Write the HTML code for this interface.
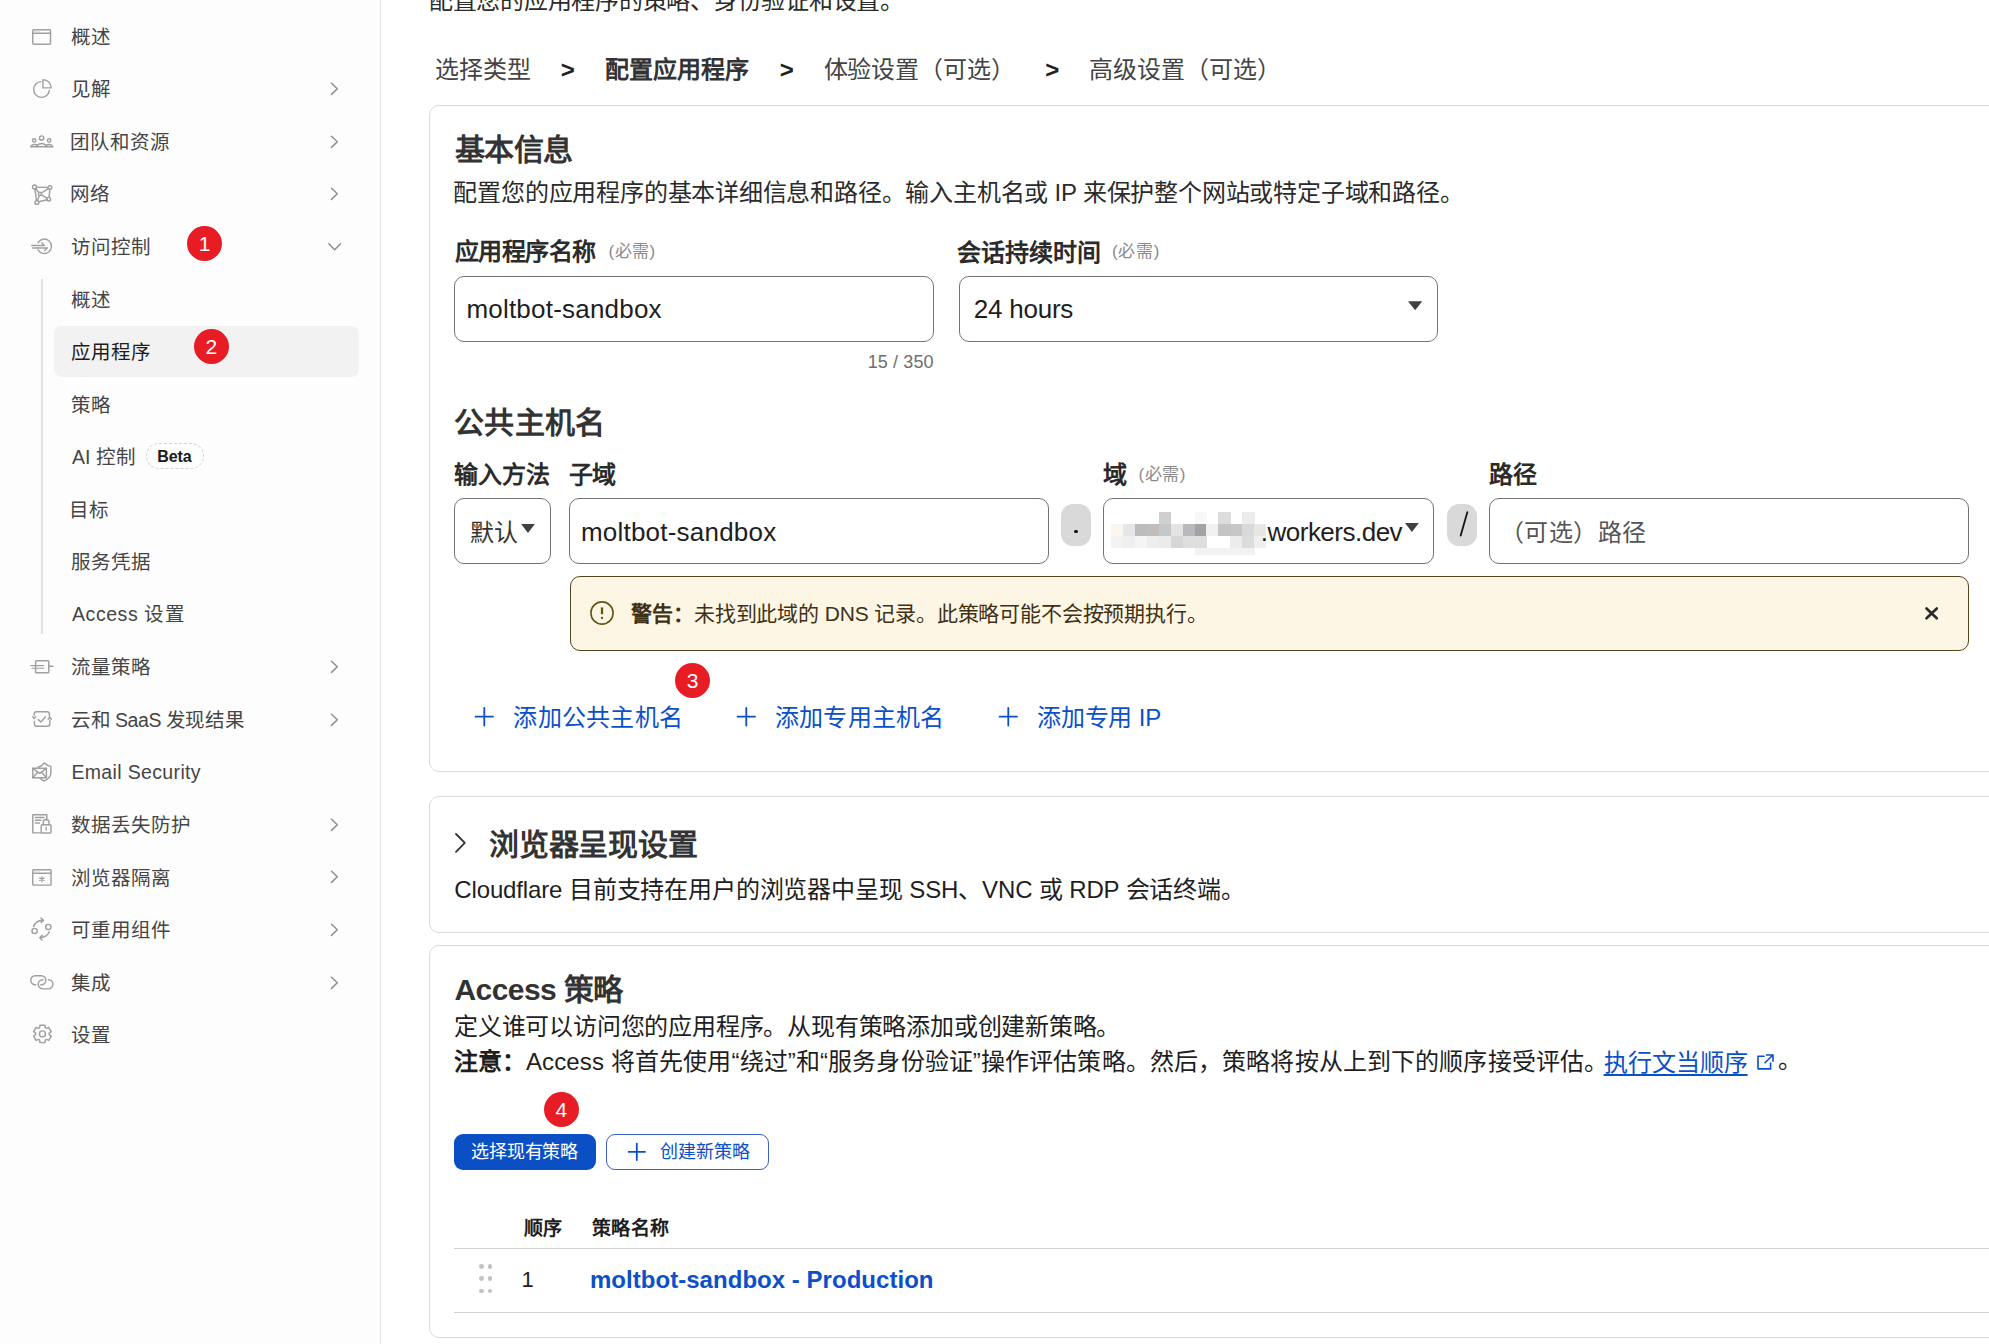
<!DOCTYPE html>
<html lang="zh-CN"><head><meta charset="utf-8">
<style>
*{box-sizing:border-box;margin:0;padding:0}
html,body{width:1989px;height:1344px;overflow:hidden;background:#fff}
body{position:relative;font-family:"Liberation Sans",sans-serif;color:#222}
.a{position:absolute;white-space:nowrap}
b{font-weight:700}
u{text-decoration:underline;text-underline-offset:3px;text-decoration-thickness:1.5px}
.badge{width:35px;height:35px;border-radius:50%;background:#e81c24;color:#fff;font-size:21px;line-height:35px;text-align:center}
</style></head>
<body>
<div class="a" style="left:0.00px;top:0.00px;width:380.00px;height:1344.00px;background:#fdfdfd"></div>
<div class="a" style="left:380.00px;top:0.00px;width:1.20px;height:1344.00px;background:#e3e3e3"></div>
<div class="a" style="left:54.00px;top:326.20px;width:304.60px;height:50.60px;background:#f2f2f2;border-radius:8px"></div>
<div class="a" style="left:41.00px;top:279.00px;width:1.50px;height:355.00px;background:#e3e3e3"></div>
<svg class="a" style="left:32.20px;top:29.30px;width:19.30px;height:16.10px;overflow:visible" viewBox="0 0 19.3 16.1" fill="none" stroke="#a0a0a0" stroke-width="1.45" stroke-linecap="round" stroke-linejoin="round"><rect x="0.75" y="0.75" width="17.8" height="14.6" rx="1"/><line x1="0.75" y1="4.2" x2="18.55" y2="4.2"/><circle cx="3" cy="2.55" r="0.45" fill="#a0a0a0" stroke="none"/><circle cx="5" cy="2.55" r="0.45" fill="#a0a0a0" stroke="none"/><circle cx="7" cy="2.55" r="0.45" fill="#a0a0a0" stroke="none"/></svg>
<svg class="a" style="left:32.90px;top:79.20px;width:18.90px;height:18.50px;overflow:visible" viewBox="0 0 18.9 18.5" fill="none" stroke="#a0a0a0" stroke-width="1.45" stroke-linecap="round" stroke-linejoin="round"><path d="M8.2 2.6 A7.9 7.9 0 1 0 16.4 11.4"/><path d="M10 0.75 A7.9 7.9 0 0 1 18.1 8.9 L10 8.9 Z"/></svg>
<svg class="a" style="left:30.25px;top:135.40px;width:23.50px;height:12.90px;overflow:visible" viewBox="0 0 23.5 12.9" fill="none" stroke="#a0a0a0" stroke-width="1.45" stroke-linecap="round" stroke-linejoin="round"><circle cx="11.65" cy="3.1" r="2.2"/><circle cx="4.15" cy="5.4" r="1.7"/><circle cx="19.15" cy="5.4" r="1.7"/><path d="M6.6 11.7 Q8 8.6 11.65 8.6 Q15.3 8.6 16.7 11.7"/><path d="M0.9 11.7 Q1.6 9.6 3.6 9.6 H5 Q6.3 9.6 7 10.6"/><path d="M22.6 11.7 Q21.9 9.6 19.9 9.6 H18.5 Q17.2 9.6 16.5 10.6"/><line x1="0.9" y1="11.7" x2="22.6" y2="11.7"/></svg>
<svg class="a" style="left:31.80px;top:185.10px;width:19.80px;height:19.30px;overflow:visible" viewBox="0 0 19.8 19.3" fill="none" stroke="#a0a0a0" stroke-width="1.45" stroke-linecap="round" stroke-linejoin="round"><circle cx="2.5" cy="2.0" r="1.95"/><circle cx="18.0" cy="2.6" r="1.8"/><circle cx="7.9" cy="8.9" r="1.6"/><circle cx="16.8" cy="14.2" r="1.8"/><circle cx="4.9" cy="17.4" r="1.9"/><path d="M4.45 2.1 L16.2 2.5 M2.8 3.95 L4.6 15.5 M17.85 4.4 L17.1 12.4 M6.7 16.8 L15.1 14.8 M3.7 3.5 L6.8 7.6 M16.4 3.6 L9.4 8 M9.3 9.7 L15.2 13.3 M7.4 10.4 L5.4 15.6"/></svg>
<svg class="a" style="left:30.50px;top:239.30px;width:21.10px;height:15.10px;overflow:visible" viewBox="0 0 21.1 15.1" fill="none" stroke="#a0a0a0" stroke-width="1.45" stroke-linecap="round" stroke-linejoin="round"><path d="M7.06 3.7 A7.2 7.2 0 1 1 7.06 10.9"/><path d="M0.75 6.6 H13.3 M1.7 9.1 H16.3 M10.8 3.8 L13.3 6.6 M16.3 9.1 L13.7 11.6"/></svg>
<svg class="a" style="left:30.00px;top:659.90px;width:23.70px;height:13.50px;overflow:visible" viewBox="0 0 23.7 13.5" fill="none" stroke="#a0a0a0" stroke-width="1.45" stroke-linecap="round" stroke-linejoin="round"><rect x="5.6" y="0.75" width="13.2" height="12" rx="0.8"/><path d="M0.75 5.6 L13.8 5.6 M2 8.2 L13.8 8.2" stroke-width="1.1"/><path d="M18.8 6.2 L22.9 6.2"/></svg>
<svg class="a" style="left:32.10px;top:711.00px;width:20.00px;height:16.10px;overflow:visible" viewBox="0 0 20 16.1" fill="none" stroke="#a0a0a0" stroke-width="1.45" stroke-linecap="round" stroke-linejoin="round"><path d="M2.2 4.2 V3 A2.2 2.2 0 0 1 4.4 0.8 H15.2 A2.2 2.2 0 0 1 17.4 3 V5.5"/><path d="M17.8 9.5 V13.1 A2.2 2.2 0 0 1 15.6 15.3 H4.6 A2.2 2.2 0 0 1 2.4 13.1 V10.5"/><path d="M0.8 5.6 L2.2 7.6 L3.8 5.6 M16.2 8.2 L17.8 6.2 L19.3 8.2"/><path d="M6.3 8.6 L8.9 11 L13.4 6"/></svg>
<svg class="a" style="left:32.10px;top:762.00px;width:19.80px;height:19.80px;overflow:visible" viewBox="0 0 19.8 19.8" fill="none" stroke="#a0a0a0" stroke-width="1.45" stroke-linecap="round" stroke-linejoin="round"><path d="M6 5.3 Q9.5 4.8 12.2 0.9 Q15.5 4 18.9 4.4 V11 Q18.5 16.4 12.2 19 Q9.5 17.8 8 16"/><rect x="0.8" y="6.3" width="13.6" height="9.4" fill="#fdfdfd"/><path d="M0.8 6.3 L7.6 11.3 L14.4 6.3 M0.8 15.7 L5.6 10.2 M14.4 15.7 L9.6 10.2"/></svg>
<svg class="a" style="left:32.20px;top:814.10px;width:19.80px;height:19.80px;overflow:visible" viewBox="0 0 19.8 19.8" fill="none" stroke="#a0a0a0" stroke-width="1.45" stroke-linecap="round" stroke-linejoin="round"><path d="M9 18.9 H0.8 V0.8 H14.8 V6"/><path d="M3.4 3.5 H12 M3.4 6.3 H9 M3.4 9 H7.5"/><rect x="9.2" y="10.7" width="9.8" height="8.3" rx="1"/><path d="M11.2 10.7 V8.4 A2.9 2.9 0 0 1 17 8.4 V10.7 M14.1 13.5 V16"/></svg>
<svg class="a" style="left:32.20px;top:869.10px;width:19.80px;height:16.90px;overflow:visible" viewBox="0 0 19.8 16.9" fill="none" stroke="#a0a0a0" stroke-width="1.45" stroke-linecap="round" stroke-linejoin="round"><rect x="0.75" y="0.75" width="18.3" height="15.4" rx="0.8"/><line x1="0.75" y1="4.3" x2="19.05" y2="4.3"/><path d="M9.9 7.6 V12.8 M7.6 8.9 L12.2 11.5 M12.2 8.9 L7.6 11.5" stroke-width="1.2"/><circle cx="3" cy="2.55" r="0.45" fill="#a0a0a0" stroke="none"/><circle cx="5" cy="2.55" r="0.45" fill="#a0a0a0" stroke="none"/><circle cx="7" cy="2.55" r="0.45" fill="#a0a0a0" stroke="none"/></svg>
<svg class="a" style="left:31.40px;top:916.70px;width:21.10px;height:23.80px;overflow:visible" viewBox="0 0 21.1 23.8" fill="none" stroke="#a0a0a0" stroke-width="1.45" stroke-linecap="round" stroke-linejoin="round"><circle cx="3.6" cy="14" r="2.6"/><circle cx="17.3" cy="10" r="2.6"/><path d="M2.6 9.4 Q4.5 4 11.8 3 M10 1 L12.5 3.2 L10.2 5.6"/><path d="M18.3 14.8 Q16.5 19.8 9.5 20.8 M11.2 18.2 L8.8 20.7 L11 23"/></svg>
<svg class="a" style="left:30.00px;top:974.70px;width:23.70px;height:14.10px;overflow:visible" viewBox="0 0 23.7 14.1" fill="none" stroke="#a0a0a0" stroke-width="1.45" stroke-linecap="round" stroke-linejoin="round"><path d="M5.7 9.7 H5.2 A4.45 4.45 0 0 1 5.2 0.8 H11.35 A4.45 4.45 0 0 1 11.35 9.7 H10.8"/><path d="M12.9 4.7 H12.8 A4.6 4.6 0 0 0 12.8 13.9 H18.35 A4.6 4.6 0 0 0 18.35 4.7 H18.3"/></svg>
<svg class="a" style="left:32.50px;top:1024.00px;width:18.90px;height:19.80px;overflow:visible" viewBox="0 0 18.9 19.8" fill="none" stroke="#a0a0a0" stroke-width="1.45" stroke-linecap="round" stroke-linejoin="round"><path d="M6.94 1.15 L11.96 1.15 L12.22 3.69 L13.45 4.40 L15.77 3.35 L18.28 7.70 L16.21 9.19 L16.21 10.61 L18.28 12.10 L15.77 16.45 L13.45 15.40 L12.22 16.11 L11.96 18.65 L6.94 18.65 L6.68 16.11 L5.45 15.40 L3.13 16.45 L0.62 12.10 L2.69 10.61 L2.69 9.19 L0.62 7.70 L3.13 3.35 L5.45 4.40 L6.68 3.69 Z"/><circle cx="9.45" cy="9.90" r="3"/></svg>
<svg class="a" style="left:331.00px;top:83.01px;width:7.00px;height:11.60px;overflow:visible" viewBox="0 0 7 11.6" fill="none" stroke="#8f8f8f" stroke-width="1.5" stroke-linecap="round" stroke-linejoin="round"><path d="M0.5 0.2 L6.3 5.8 L0.5 11.4"/></svg>
<svg class="a" style="left:331.00px;top:135.57px;width:7.00px;height:11.60px;overflow:visible" viewBox="0 0 7 11.6" fill="none" stroke="#8f8f8f" stroke-width="1.5" stroke-linecap="round" stroke-linejoin="round"><path d="M0.5 0.2 L6.3 5.8 L0.5 11.4"/></svg>
<svg class="a" style="left:331.00px;top:188.13px;width:7.00px;height:11.60px;overflow:visible" viewBox="0 0 7 11.6" fill="none" stroke="#8f8f8f" stroke-width="1.5" stroke-linecap="round" stroke-linejoin="round"><path d="M0.5 0.2 L6.3 5.8 L0.5 11.4"/></svg>
<svg class="a" style="left:331.00px;top:661.17px;width:7.00px;height:11.60px;overflow:visible" viewBox="0 0 7 11.6" fill="none" stroke="#8f8f8f" stroke-width="1.5" stroke-linecap="round" stroke-linejoin="round"><path d="M0.5 0.2 L6.3 5.8 L0.5 11.4"/></svg>
<svg class="a" style="left:331.00px;top:713.73px;width:7.00px;height:11.60px;overflow:visible" viewBox="0 0 7 11.6" fill="none" stroke="#8f8f8f" stroke-width="1.5" stroke-linecap="round" stroke-linejoin="round"><path d="M0.5 0.2 L6.3 5.8 L0.5 11.4"/></svg>
<svg class="a" style="left:331.00px;top:818.85px;width:7.00px;height:11.60px;overflow:visible" viewBox="0 0 7 11.6" fill="none" stroke="#8f8f8f" stroke-width="1.5" stroke-linecap="round" stroke-linejoin="round"><path d="M0.5 0.2 L6.3 5.8 L0.5 11.4"/></svg>
<svg class="a" style="left:331.00px;top:871.41px;width:7.00px;height:11.60px;overflow:visible" viewBox="0 0 7 11.6" fill="none" stroke="#8f8f8f" stroke-width="1.5" stroke-linecap="round" stroke-linejoin="round"><path d="M0.5 0.2 L6.3 5.8 L0.5 11.4"/></svg>
<svg class="a" style="left:331.00px;top:923.97px;width:7.00px;height:11.60px;overflow:visible" viewBox="0 0 7 11.6" fill="none" stroke="#8f8f8f" stroke-width="1.5" stroke-linecap="round" stroke-linejoin="round"><path d="M0.5 0.2 L6.3 5.8 L0.5 11.4"/></svg>
<svg class="a" style="left:331.00px;top:976.53px;width:7.00px;height:11.60px;overflow:visible" viewBox="0 0 7 11.6" fill="none" stroke="#8f8f8f" stroke-width="1.5" stroke-linecap="round" stroke-linejoin="round"><path d="M0.5 0.2 L6.3 5.8 L0.5 11.4"/></svg>
<svg class="a" style="left:327.50px;top:243.40px;width:13.30px;height:7.60px;overflow:visible" viewBox="0 0 13.3 7.6" fill="none" stroke="#8a8a8a" stroke-width="1.4" stroke-linecap="round" stroke-linejoin="round"><path d="M0.8 0.8 L6.65 6.8 L12.5 0.8"/></svg>
<div class="a" style="left:145.80px;top:443.00px;width:58.10px;height:26.30px;border:1px dashed #d4d4d4;border-radius:14px;background:#fdfdfd"></div>
<div class="a" style="left:429.00px;top:104.90px;width:1581.00px;height:666.90px;border:1.1px solid #d9d9d9;border-radius:10px"></div>
<div class="a" style="left:429.00px;top:795.90px;width:1581.00px;height:137.00px;border:1.1px solid #d9d9d9;border-radius:10px"></div>
<div class="a" style="left:429.00px;top:945.00px;width:1581.00px;height:392.80px;border:1.1px solid #d9d9d9;border-radius:10px"></div>
<div class="a" style="left:454.20px;top:276.20px;width:479.40px;height:65.50px;border:1.5px solid #747474;border-radius:10px;background:#fff"></div>
<div class="a" style="left:958.50px;top:276.20px;width:479.20px;height:65.50px;border:1.5px solid #747474;border-radius:10px;background:#fff"></div>
<svg class="a" style="left:1408.00px;top:300.50px;width:14.30px;height:9.50px;overflow:visible" viewBox="0 0 14 9" fill="none" stroke="#a0a0a0" stroke-width="1.45" stroke-linecap="round" stroke-linejoin="round"><path d="M0 0 H14 L7 9 Z" fill="#404040" stroke="none"/></svg>
<div class="a" style="left:454.20px;top:498.00px;width:96.60px;height:65.80px;border:1.5px solid #747474;border-radius:10px;background:#fff"></div>
<svg class="a" style="left:521.20px;top:523.50px;width:14.00px;height:8.90px;overflow:visible" viewBox="0 0 14 9" fill="none" stroke="#a0a0a0" stroke-width="1.45" stroke-linecap="round" stroke-linejoin="round"><path d="M0 0 H14 L7 9 Z" fill="#404040" stroke="none"/></svg>
<div class="a" style="left:569.00px;top:498.00px;width:480.20px;height:65.80px;border:1.5px solid #747474;border-radius:10px;background:#fff"></div>
<div class="a" style="left:1061.00px;top:504.00px;width:29.60px;height:41.80px;background:#d9d9d9;border-radius:12px"></div>
<div class="a" style="left:1074.40px;top:529.70px;width:3.20px;height:3.20px;background:#111;border-radius:50%"></div>
<div class="a" style="left:1102.90px;top:498.00px;width:331.40px;height:65.80px;border:1.5px solid #747474;border-radius:10px;background:#fff"></div>
<svg class="a" style="left:1405.40px;top:522.50px;width:13.80px;height:9.00px;overflow:visible" viewBox="0 0 14 9" fill="none" stroke="#a0a0a0" stroke-width="1.45" stroke-linecap="round" stroke-linejoin="round"><path d="M0 0 H14 L7 9 Z" fill="#404040" stroke="none"/></svg>
<div class="a" style="left:1110.9px;top:512px;width:155px;height:44px;filter:blur(0.7px)"><div class="a" style="left:47.80px;top:0.00px;width:12.2px;height:12px;background:#cfcfd0"></div><div class="a" style="left:107.55px;top:0.00px;width:12.2px;height:12px;background:#dcdcdc"></div><div class="a" style="left:131.45px;top:0.00px;width:12.2px;height:12px;background:#ececec"></div><div class="a" style="left:83.65px;top:0.00px;width:12.2px;height:12px;background:#f8f8f8"></div><div class="a" style="left:0.00px;top:12.00px;width:12.2px;height:12px;background:#fbf7f0"></div><div class="a" style="left:11.95px;top:12.00px;width:12.2px;height:12px;background:#e6e6e6"></div><div class="a" style="left:23.90px;top:12.00px;width:12.2px;height:12px;background:#bcbcbc"></div><div class="a" style="left:35.85px;top:12.00px;width:12.2px;height:12px;background:#c1bdbb"></div><div class="a" style="left:47.80px;top:12.00px;width:12.2px;height:12px;background:#c3c8cb"></div><div class="a" style="left:59.75px;top:12.00px;width:12.2px;height:12px;background:#e3e3e3"></div><div class="a" style="left:71.70px;top:12.00px;width:12.2px;height:12px;background:#b8b9bc"></div><div class="a" style="left:83.65px;top:12.00px;width:12.2px;height:12px;background:#a3a3a3"></div><div class="a" style="left:95.60px;top:12.00px;width:12.2px;height:12px;background:#f0f0f0"></div><div class="a" style="left:107.55px;top:12.00px;width:12.2px;height:12px;background:#c4c4c4"></div><div class="a" style="left:119.50px;top:12.00px;width:12.2px;height:12px;background:#c7c7c7"></div><div class="a" style="left:131.45px;top:12.00px;width:12.2px;height:12px;background:#d8d9dd"></div><div class="a" style="left:143.40px;top:12.00px;width:12.2px;height:12px;background:#e8e6e2"></div><div class="a" style="left:0.00px;top:24.00px;width:12.2px;height:12px;background:#f3f3f3"></div><div class="a" style="left:11.95px;top:24.00px;width:12.2px;height:12px;background:#efefef"></div><div class="a" style="left:23.90px;top:24.00px;width:12.2px;height:12px;background:#f5f5f5"></div><div class="a" style="left:35.85px;top:24.00px;width:12.2px;height:12px;background:#eeeeee"></div><div class="a" style="left:47.80px;top:24.00px;width:12.2px;height:12px;background:#ebebeb"></div><div class="a" style="left:59.75px;top:24.00px;width:12.2px;height:12px;background:#d7d7d7"></div><div class="a" style="left:71.70px;top:24.00px;width:12.2px;height:12px;background:#dedede"></div><div class="a" style="left:83.65px;top:24.00px;width:12.2px;height:12px;background:#e0dedd"></div><div class="a" style="left:119.50px;top:24.00px;width:12.2px;height:12px;background:#ececec"></div><div class="a" style="left:131.45px;top:24.00px;width:12.2px;height:12px;background:#dcdcdc"></div><div class="a" style="left:143.40px;top:24.00px;width:12.2px;height:12px;background:#efefef"></div><div class="a" style="left:83.65px;top:36.00px;width:12.2px;height:7px;background:#f2f2f2"></div><div class="a" style="left:95.60px;top:36.00px;width:12.2px;height:7px;background:#f2f2f2"></div><div class="a" style="left:107.55px;top:36.00px;width:12.2px;height:7px;background:#f2f2f2"></div><div class="a" style="left:119.50px;top:36.00px;width:12.2px;height:7px;background:#f2f2f2"></div><div class="a" style="left:131.45px;top:36.00px;width:12.2px;height:7px;background:#f2f2f2"></div></div>
<div class="a" style="left:1447.00px;top:504.00px;width:29.70px;height:42.00px;background:#d9d9d9;border-radius:12px"></div>
<svg class="a" style="left:1455.00px;top:508.00px;width:16.00px;height:32.00px;overflow:visible" viewBox="0 0 16 32" fill="none" stroke="#151515" stroke-width="1.8" stroke-linecap="round" stroke-linejoin="round"><path d="M12.3 4.2 L5.7 27.6"/></svg>
<div class="a" style="left:1489.00px;top:498.00px;width:480.00px;height:65.80px;border:1.5px solid #747474;border-radius:10px;background:#fff"></div>
<div class="a" style="left:569.60px;top:576.00px;width:1399.40px;height:74.60px;background:#fef6e4;border:1.5px solid #54431f;border-radius:10px"></div>
<svg class="a" style="left:590.20px;top:601.20px;width:24.00px;height:24.00px;overflow:visible" viewBox="0 0 24 24" fill="none" stroke="#6a5316" stroke-width="1.6" stroke-linecap="round" stroke-linejoin="round"><circle cx="12" cy="12" r="11.1"/><path d="M12 6.4 V13.2" stroke-width="2.3" stroke-linecap="butt"/><circle cx="12" cy="17" r="1.15" fill="#6a5316" stroke="none"/></svg>
<svg class="a" style="left:1924.60px;top:606.80px;width:13.30px;height:12.80px;overflow:visible" viewBox="0 0 13.3 12.8" fill="none" stroke="#2a2a2a" stroke-width="2.6" stroke-linecap="round" stroke-linejoin="round"><path d="M1.5 1.5 L11.8 11.3 M11.8 1.5 L1.5 11.3"/></svg>
<svg class="a" style="left:474.60px;top:707.30px;width:18.60px;height:19.40px;overflow:visible" viewBox="0 0 18.6 19.4" fill="none" stroke="#0b50c8" stroke-width="1.8" stroke-linecap="round" stroke-linejoin="round"><path d="M9.3 0.8 V18.6 M0.6 9.7 H18"/></svg>
<svg class="a" style="left:736.80px;top:707.30px;width:18.60px;height:19.40px;overflow:visible" viewBox="0 0 18.6 19.4" fill="none" stroke="#0b50c8" stroke-width="1.8" stroke-linecap="round" stroke-linejoin="round"><path d="M9.3 0.8 V18.6 M0.6 9.7 H18"/></svg>
<svg class="a" style="left:999.00px;top:707.30px;width:18.60px;height:19.40px;overflow:visible" viewBox="0 0 18.6 19.4" fill="none" stroke="#0b50c8" stroke-width="1.8" stroke-linecap="round" stroke-linejoin="round"><path d="M9.3 0.8 V18.6 M0.6 9.7 H18"/></svg>
<svg class="a" style="left:455.30px;top:833.40px;width:10.90px;height:19.90px;overflow:visible" viewBox="0 0 10.9 19.9" fill="none" stroke="#333" stroke-width="1.8" stroke-linecap="round" stroke-linejoin="round"><path d="M1 1 L9.8 9.95 L1 18.9"/></svg>
<svg class="a" style="left:1757.30px;top:1053.50px;width:17.10px;height:15.90px;overflow:visible" viewBox="0 0 17.1 15.9" fill="none" stroke="#0b50c8" stroke-width="1.6" stroke-linecap="round" stroke-linejoin="round"><path d="M7 2.2 H1 V14.9 H13.6 V9"/><path d="M9.5 1 H16 V7.3 M16 1 L8 8.8"/></svg>
<div class="a" style="left:454.10px;top:1134.30px;width:142.40px;height:35.40px;background:#0a4fc4;border-radius:9px"></div>
<div class="a" style="left:606.10px;top:1134.30px;width:162.90px;height:35.40px;border:1.3px solid #3a62c4;border-radius:9px;background:#fff"></div>
<svg class="a" style="left:628.00px;top:1142.50px;width:17.60px;height:17.60px;overflow:visible" viewBox="0 0 17.6 17.6" fill="none" stroke="#0b50c8" stroke-width="1.8" stroke-linecap="round" stroke-linejoin="round"><path d="M8.8 0.6 V17 M0.6 8.8 H17"/></svg>
<div class="a" style="left:454.00px;top:1247.80px;width:1556.00px;height:1.20px;background:#d2d2d2"></div>
<div class="a" style="left:454.00px;top:1311.80px;width:1556.00px;height:1.20px;background:#d2d2d2"></div>
<div class="a" style="left:478.80px;top:1264.10px;width:4.80px;height:4.80px;background:#c2c2c2;border-radius:50%"></div>
<div class="a" style="left:487.60px;top:1264.10px;width:4.80px;height:4.80px;background:#c2c2c2;border-radius:50%"></div>
<div class="a" style="left:478.80px;top:1276.40px;width:4.80px;height:4.80px;background:#c2c2c2;border-radius:50%"></div>
<div class="a" style="left:487.60px;top:1276.40px;width:4.80px;height:4.80px;background:#c2c2c2;border-radius:50%"></div>
<div class="a" style="left:478.80px;top:1288.70px;width:4.80px;height:4.80px;background:#c2c2c2;border-radius:50%"></div>
<div class="a" style="left:487.60px;top:1288.70px;width:4.80px;height:4.80px;background:#c2c2c2;border-radius:50%"></div>
<div class="a" style="left:71.00px;top:28.15px;color:#454545;font-size:19.5px;font-weight:400;line-height:19.5px;letter-spacing:0.000px;">概述</div>
<div class="a" style="left:71.00px;top:80.21px;color:#454545;font-size:19.5px;font-weight:400;line-height:19.5px;letter-spacing:0.000px;">见解</div>
<div class="a" style="left:70.00px;top:132.77px;color:#454545;font-size:19.5px;font-weight:400;line-height:19.5px;letter-spacing:0.000px;">团队和资源</div>
<div class="a" style="left:70.00px;top:185.33px;color:#454545;font-size:19.5px;font-weight:400;line-height:19.5px;letter-spacing:0.000px;">网络</div>
<div class="a" style="left:71.00px;top:237.89px;color:#454545;font-size:19.5px;font-weight:400;line-height:19.5px;letter-spacing:0.000px;">访问控制</div>
<div class="a" style="left:71.00px;top:290.95px;color:#454545;font-size:19.5px;font-weight:400;line-height:19.5px;letter-spacing:0.000px;">概述</div>
<div class="a" style="left:71.00px;top:343.01px;color:#1d1d1d;font-size:19.5px;font-weight:400;line-height:19.5px;letter-spacing:0.000px;">应用程序</div>
<div class="a" style="left:71.00px;top:395.57px;color:#454545;font-size:19.5px;font-weight:400;line-height:19.5px;letter-spacing:0.000px;">策略</div>
<div class="a" style="left:72.00px;top:448.13px;color:#454545;font-size:19.5px;font-weight:400;line-height:19.5px;letter-spacing:0.000px;">AI 控制</div>
<div class="a" style="left:69.00px;top:500.69px;color:#454545;font-size:19.5px;font-weight:400;line-height:19.5px;letter-spacing:0.000px;">目标</div>
<div class="a" style="left:71.00px;top:553.25px;color:#454545;font-size:19.5px;font-weight:400;line-height:19.5px;letter-spacing:0.000px;">服务凭据</div>
<div class="a" style="left:72.00px;top:605.31px;color:#454545;font-size:19.5px;font-weight:400;line-height:19.5px;letter-spacing:0.562px;">Access 设置</div>
<div class="a" style="left:71.00px;top:658.37px;color:#454545;font-size:19.5px;font-weight:400;line-height:19.5px;letter-spacing:0.000px;">流量策略</div>
<div class="a" style="left:71.00px;top:710.93px;color:#454545;font-size:19.5px;font-weight:400;line-height:19.5px;letter-spacing:-0.455px;">云和 SaaS 发现结果</div>
<div class="a" style="left:71.40px;top:762.60px;color:#454545;font-size:19.5px;font-weight:400;line-height:19.5px;letter-spacing:0.354px;">Email Security</div>
<div class="a" style="left:71.00px;top:816.05px;color:#454545;font-size:19.5px;font-weight:400;line-height:19.5px;letter-spacing:0.000px;">数据丢失防护</div>
<div class="a" style="left:71.00px;top:868.61px;color:#454545;font-size:19.5px;font-weight:400;line-height:19.5px;letter-spacing:0.000px;">浏览器隔离</div>
<div class="a" style="left:71.00px;top:921.17px;color:#454545;font-size:19.5px;font-weight:400;line-height:19.5px;letter-spacing:0.000px;">可重用组件</div>
<div class="a" style="left:71.00px;top:973.73px;color:#454545;font-size:19.5px;font-weight:400;line-height:19.5px;letter-spacing:0.000px;">集成</div>
<div class="a" style="left:71.00px;top:1025.79px;color:#454545;font-size:19.5px;font-weight:400;line-height:19.5px;letter-spacing:0.000px;">设置</div>
<div class="a" style="left:157.30px;top:449.00px;color:#1a1a1a;font-size:16px;font-weight:700;line-height:16px;letter-spacing:-0.100px;">Beta</div>
<div class="a" style="left:429.00px;top:-10.85px;color:#2b2b2b;font-size:24px;font-weight:400;line-height:24px;letter-spacing:-0.253px;">配置您的应用程序的策略、身份验证和设置。</div>
<div class="a" style="left:434.70px;top:57.50px;color:#444;font-size:24px;font-weight:400;line-height:24px;letter-spacing:0.000px;">选择类型</div>
<div class="a" style="left:560.80px;top:57.85px;color:#222;font-size:24px;font-weight:700;line-height:24px;letter-spacing:0.000px;">&gt;</div>
<div class="a" style="left:605.00px;top:57.50px;color:#333;font-size:24px;font-weight:700;line-height:24px;letter-spacing:0.000px;">配置应用程序</div>
<div class="a" style="left:779.80px;top:57.85px;color:#222;font-size:24px;font-weight:700;line-height:24px;letter-spacing:0.000px;">&gt;</div>
<div class="a" style="left:823.50px;top:57.95px;color:#444;font-size:24px;font-weight:400;line-height:24px;letter-spacing:-0.071px;">体验设置（可选）</div>
<div class="a" style="left:1045.30px;top:57.85px;color:#222;font-size:24px;font-weight:700;line-height:24px;letter-spacing:0.000px;">&gt;</div>
<div class="a" style="left:1089.00px;top:57.95px;color:#444;font-size:24px;font-weight:400;line-height:24px;letter-spacing:0.000px;">高级设置（可选）</div>
<div class="a" style="left:455.00px;top:134.50px;color:#333;font-size:30px;font-weight:700;line-height:30px;letter-spacing:-0.667px;">基本信息</div>
<div class="a" style="left:453.40px;top:180.50px;color:#2b2b2b;font-size:24px;font-weight:400;line-height:24px;letter-spacing:-0.209px;">配置您的应用程序的基本详细信息和路径。输入主机名或 IP 来保护整个网站或特定子域和路径。</div>
<div class="a" style="left:454.50px;top:240.30px;color:#2b2b2b;font-size:24px;font-weight:700;line-height:24px;letter-spacing:-0.460px;">应用程序名称</div>
<div class="a" style="left:608.50px;top:243.00px;color:#8a8a8a;font-size:17px;font-weight:400;line-height:17px;letter-spacing:0.433px;">(必需)</div>
<div class="a" style="left:956.80px;top:241.05px;color:#2b2b2b;font-size:24px;font-weight:700;line-height:24px;letter-spacing:0.140px;">会话持续时间</div>
<div class="a" style="left:1112.00px;top:243.00px;color:#8a8a8a;font-size:17px;font-weight:400;line-height:17px;letter-spacing:0.667px;">(必需)</div>
<div class="a" style="left:466.40px;top:296.35px;color:#1e1e1e;font-size:26px;font-weight:400;line-height:26px;letter-spacing:0.214px;">moltbot-sandbox</div>
<div class="a" style="left:973.70px;top:296.15px;color:#1e1e1e;font-size:26px;font-weight:400;line-height:26px;letter-spacing:-0.214px;">24 hours</div>
<div class="a" style="left:867.70px;top:353.25px;color:#6e6e6e;font-size:18px;font-weight:400;line-height:18px;letter-spacing:0.114px;">15 / 350</div>
<div class="a" style="left:454.30px;top:407.80px;color:#333;font-size:30px;font-weight:700;line-height:30px;letter-spacing:0.150px;">公共主机名</div>
<div class="a" style="left:453.50px;top:463.10px;color:#2b2b2b;font-size:24px;font-weight:700;line-height:24px;letter-spacing:0.300px;">输入方法</div>
<div class="a" style="left:568.50px;top:463.10px;color:#2b2b2b;font-size:24px;font-weight:700;line-height:24px;letter-spacing:-0.500px;">子域</div>
<div class="a" style="left:1102.90px;top:463.10px;color:#2b2b2b;font-size:24px;font-weight:700;line-height:24px;letter-spacing:0.000px;">域</div>
<div class="a" style="left:1138.40px;top:465.50px;color:#8a8a8a;font-size:17px;font-weight:400;line-height:17px;letter-spacing:0.533px;">(必需)</div>
<div class="a" style="left:1489.00px;top:463.10px;color:#2b2b2b;font-size:24px;font-weight:700;line-height:24px;letter-spacing:0.000px;">路径</div>
<div class="a" style="left:469.60px;top:521.00px;color:#333;font-size:24px;font-weight:400;line-height:24px;letter-spacing:0.000px;">默认</div>
<div class="a" style="left:580.90px;top:518.55px;color:#1e1e1e;font-size:26px;font-weight:400;line-height:26px;letter-spacing:0.221px;">moltbot-sandbox</div>
<div class="a" style="left:1260.80px;top:518.55px;color:#1e1e1e;font-size:26px;font-weight:400;line-height:26px;letter-spacing:-0.509px;">.workers.dev</div>
<div class="a" style="left:1499.50px;top:520.50px;color:#555;font-size:24px;font-weight:400;line-height:24px;letter-spacing:0.580px;">（可选）路径</div>
<div class="a" style="left:631.40px;top:602.85px;color:#3f3116;font-size:21px;font-weight:400;line-height:21px;letter-spacing:-0.159px;"><b>警告：</b>未找到此域的 DNS 记录。此策略可能不会按预期执行。</div>
<div class="a" style="left:513.30px;top:706.05px;color:#0b50c8;font-size:24px;font-weight:400;line-height:24px;letter-spacing:0.250px;">添加公共主机名</div>
<div class="a" style="left:775.20px;top:706.05px;color:#0b50c8;font-size:24px;font-weight:400;line-height:24px;letter-spacing:0.133px;">添加专用主机名</div>
<div class="a" style="left:1037.00px;top:705.55px;color:#0b50c8;font-size:24px;font-weight:400;line-height:24px;letter-spacing:-0.167px;">添加专用 IP</div>
<div class="a" style="left:489.00px;top:829.80px;color:#333;font-size:30px;font-weight:700;line-height:30px;letter-spacing:-0.167px;">浏览器呈现设置</div>
<div class="a" style="left:454.30px;top:878.30px;color:#1e1e1e;font-size:24px;font-weight:400;line-height:24px;letter-spacing:-0.143px;">Cloudflare 目前支持在用户的浏览器中呈现 SSH、VNC 或 RDP 会话终端。</div>
<div class="a" style="left:454.50px;top:974.85px;color:#333;font-size:30px;font-weight:700;line-height:30px;letter-spacing:-0.562px;">Access 策略</div>
<div class="a" style="left:454.00px;top:1014.75px;color:#1e1e1e;font-size:24px;font-weight:400;line-height:24px;letter-spacing:-0.204px;">定义谁可以访问您的应用程序。从现有策略添加或创建新策略。</div>
<div class="a" style="left:453.60px;top:1050.30px;color:#1e1e1e;font-size:24px;font-weight:400;line-height:24px;letter-spacing:0.121px;"><b>注意：</b>Access 将首先使用“绕过”和“服务身份验证”操作评估策略。然后，策略将按从上到下的顺序接受评估。</div>
<div class="a" style="left:1603.60px;top:1051.25px;color:#0b50c8;font-size:24px;font-weight:400;line-height:24px;letter-spacing:0.000px;"><u>执行文当顺序</u></div>
<div class="a" style="left:1778.00px;top:1047.50px;color:#1e1e1e;font-size:24px;font-weight:400;line-height:24px;letter-spacing:0.000px;">。</div>
<div class="a" style="left:470.90px;top:1142.50px;color:#ffffff;font-size:18px;font-weight:400;line-height:18px;letter-spacing:-0.100px;">选择现有策略</div>
<div class="a" style="left:660.30px;top:1142.50px;color:#0b50c8;font-size:18px;font-weight:400;line-height:18px;letter-spacing:-0.150px;">创建新策略</div>
<div class="a" style="left:523.50px;top:1218.65px;color:#1e1e1e;font-size:19px;font-weight:700;line-height:19px;letter-spacing:0.300px;">顺序</div>
<div class="a" style="left:592.00px;top:1218.65px;color:#1e1e1e;font-size:19px;font-weight:700;line-height:19px;letter-spacing:0.300px;">策略名称</div>
<div class="a" style="left:521.50px;top:1269.00px;color:#1e1e1e;font-size:22px;font-weight:400;line-height:22px;letter-spacing:0.000px;">1</div>
<div class="a" style="left:590.00px;top:1267.60px;color:#0b50c8;font-size:24px;font-weight:700;line-height:24px;letter-spacing:0.033px;">moltbot-sandbox - Production</div>
<div class="a badge" style="left:187.00px;top:225.90px">1</div>
<div class="a badge" style="left:193.90px;top:329.00px">2</div>
<div class="a badge" style="left:675.00px;top:663.00px">3</div>
<div class="a badge" style="left:543.90px;top:1091.90px">4</div>
</body></html>
